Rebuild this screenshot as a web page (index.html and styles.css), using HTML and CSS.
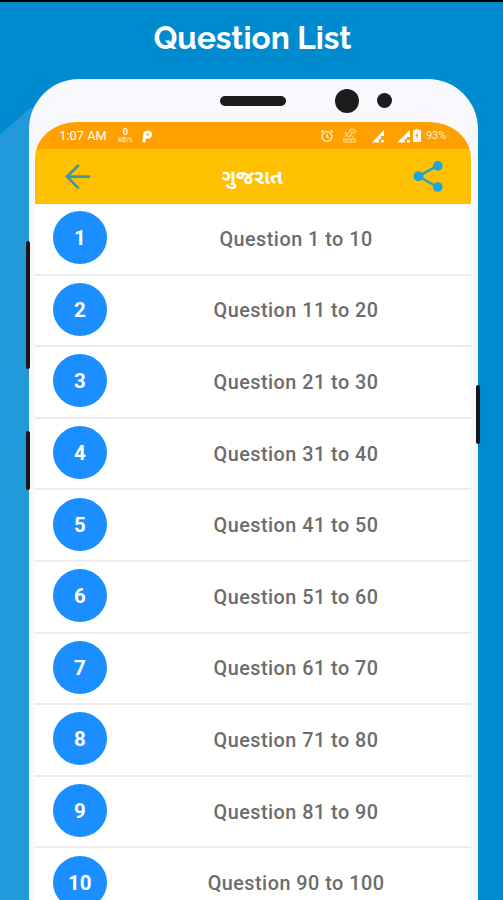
FILE: index.html
```
<!DOCTYPE html>
<html lang="en">
<head>
    <meta charset="UTF-8">
    <meta name="viewport" content="width=device-width, initial-scale=1.0">
    <title>Question List</title>
    <link rel="stylesheet" href="styles.css">
</head>
<body>
    <div class="page">
        <div class="shade"></div>
        <h1>Question List</h1>

        <div class="phone">
            <span class="side-key volume"></span>
            <span class="side-key assistant"></span>
            <span class="side-key power"></span>

            <div class="bezel">
                <span class="speaker"></span>
                <span class="camera"></span>
                <span class="sensor"></span>
            </div>

            <div class="screen">
                <div class="status-bar">
                    <span class="time">1:07 AM</span>
                    <span class="speed"><b>0</b><small>KB/s</small></span>
                    <svg class="parking" width="11" height="14" viewBox="0 0 11 14">
                        <path d="M2 12 3 4.2Q5 2.6 7 3.2 9.3 4.2 8.4 6.6 7.4 8.6 5.2 8" fill="none" stroke="#fff" stroke-width="3.2" stroke-linecap="round"/>
                    </svg>
                    <svg class="alarm" width="14" height="14" viewBox="0 0 14 14" fill="none" stroke="#fff2c4" stroke-width="1.3">
                        <circle cx="7" cy="7.5" r="4.9"/>
                        <path d="M7 4.8V7.7L9 9M1 3.3 3.6 1M13 3.3 10.4 1"/>
                    </svg>
                    <svg class="hotspot" width="16" height="16" viewBox="0 0 16 16" fill="none" stroke="#ffe09a" stroke-width="1.2">
                        <path d="M7 3Q11-1 14.5 4M8.5 5Q11 2.5 13 6M3 4 6 9M7 4 3 9M7 9 10 6M10 9H12"/>
                        <path d="M2 11H13V14H2ZM5 11V14M9 11V14"/>
                    </svg>
                    <svg class="signal" width="14" height="14" viewBox="0 0 14 14">
                        <path d="M0 13.5 12 1V7H9V10H7V13.5Z" fill="#fff"/>
                        <path d="M9 11H12V13.5H9Z" fill="#fff"/>
                    </svg>
                    <svg class="signal signal-two" width="14" height="14" viewBox="0 0 14 14">
                        <path d="M0 13.5 13 1V8H10V10H8V13.5Z" fill="#fff"/>
                        <path d="M10 11H13V13.5H10Z" fill="#fff"/>
                    </svg>
                    <svg class="battery" width="8" height="13" viewBox="0 0 8 13">
                        <path d="M2.5 0H5.5V1.2H8V13H0V1.2H2.5Z" fill="#fff"/>
                        <path d="M4.6 3 2.3 7H3.8L3.3 10.6 5.8 6.3H4.3Z" fill="#ff9f00"/>
                    </svg>
                    <span class="percent">93%</span>
                </div>

                <div class="toolbar">
                    <svg width="26" height="26" viewBox="0 0 26 26" fill="none" stroke="#3a98a5" stroke-width="2.6">
                        <path d="M25 12.6H2M13.7 1 2 12.6 13.7 24.3"/>
                    </svg>
                    <span class="title" lang="gu">ગુજરાત</span>
                    <svg width="30" height="32" viewBox="0 0 30 32" fill="#1aa7dd">
                        <path d="M24.5 4.7 5.5 15.3 24.5 26" fill="none" stroke="#2ba5b5" stroke-width="2.5"/>
                        <circle cx="5.5" cy="15.3" r="5"/>
                        <circle cx="24.8" cy="4.9" r="4.8"/>
                        <circle cx="24.8" cy="26" r="4.8"/>
                    </svg>
                </div>

                <ul class="questions">
                    <li><span class="number">1</span><span class="label">Question 1 to 10</span></li>
                    <li><span class="number">2</span><span class="label">Question 11 to 20</span></li>
                    <li><span class="number">3</span><span class="label">Question 21 to 30</span></li>
                    <li><span class="number">4</span><span class="label">Question 31 to 40</span></li>
                    <li><span class="number">5</span><span class="label">Question 41 to 50</span></li>
                    <li><span class="number">6</span><span class="label">Question 51 to 60</span></li>
                    <li><span class="number">7</span><span class="label">Question 61 to 70</span></li>
                    <li><span class="number">8</span><span class="label">Question 71 to 80</span></li>
                    <li><span class="number">9</span><span class="label">Question 81 to 90</span></li>
                    <li><span class="number">10</span><span class="label">Question 90 to 100</span></li>
                </ul>
            </div>
        </div>
    </div>
</body>
</html>
```

FILE: styles.css
```
* {
    box-sizing: border-box;
}
body {
    margin: 0;
    font-family: Roboto, sans-serif;
}
.page {
    position: relative;
    height: 900px;
    overflow: hidden;
    background: #018bcf;
    border-top: 2px solid #000;
}
/* lighter block to the left of the phone */
.shade {
    position: absolute;
    top: 106px;
    left: 0;
    width: 40px;
    height: 800px;
    background: #229ada;
    clip-path: polygon(0 27px, 30px 0, 40px 0, 40px 100%, 0 100%);
}
h1 {
    margin: 0;
    height: 77px;
    padding-left: 2px;
    color: #fff;
    font-family: Raleway, Lato, sans-serif;
    font-size: 31.6px;
    font-weight: 700;
    line-height: 71px;
    text-align: center;
}
.phone {
    position: relative;
    width: 449.5px;
    height: 900px;
    margin-left: 28.8px;
    padding: 0 7px 0 6.5px;
    background: #f8f8fd;
    border-radius: 50px 50px 0 0;
}
.side-key {
    position: absolute;
    width: 4px;
    background: #171717;
    border-radius: 2px;
}
.volume {
    top: 162px;
    left: -3px;
    height: 128px;
}
.assistant {
    top: 352px;
    left: -3px;
    height: 59px;
}
.power {
    top: 306px;
    right: -1.5px;
    height: 59px;
}
.bezel {
    display: flex;
    align-items: center;
    height: 43px;
    padding-left: 185px;
}
.bezel span {
    background: #1b1d1d;
}
.speaker {
    width: 66px;
    height: 10px;
    border-radius: 5px;
}
.camera {
    width: 24px;
    height: 24px;
    margin-left: 49px;
    border-radius: 50%;
}
.sensor {
    width: 15px;
    height: 15px;
    margin-left: 18px;
    border-radius: 50%;
}
.screen {
    height: 790px;
    overflow: hidden;
    background: #fff;
    border-radius: 42px 42px 0 0 / 36px 36px 0 0;
}
.status-bar {
    display: flex;
    align-items: center;
    height: 27px;
    padding: 0 25px 0 24px;
    background: #ff9f00;
    color: #fff;
}
.time {
    width: 48px;
    font-size: 12.8px;
    white-space: nowrap;
}
.speed {
    display: flex;
    flex-direction: column;
    align-items: center;
    width: 16px;
    margin-left: 10px;
    line-height: 1;
}
.speed b {
    font-size: 9px;
    font-weight: 500;
}
.speed small {
    font-size: 6.5px;
    font-weight: 500;
    color: #fff0c0;
}
.parking {
    margin-left: 9px;
}
.alarm {
    margin-left: auto;
}
.hotspot {
    margin-left: 8px;
}
.signal {
    margin-left: 14px;
}
.signal-two {
    margin-left: 11px;
}
.battery {
    margin-left: 2px;
}
.percent {
    margin-left: 5px;
    font-size: 11px;
    color: #fff0c8;
}
.toolbar {
    display: flex;
    align-items: center;
    justify-content: space-between;
    height: 55px;
    padding: 0 28px 0 29.5px;
    background: #ffc000;
}
.title {
    margin-top: 3px;
    color: #fff;
    font-family: Roboto, "Noto Sans Gujarati", "Lohit Gujarati", sans-serif;
    font-size: 20.5px;
    font-weight: 700;
}
.questions {
    margin: 0;
    padding: 0;
    list-style: none;
}
.questions li {
    display: flex;
    align-items: center;
    height: 71.6px;
    padding-left: 17.5px;
    border-bottom: 2px solid #ececee;
}
.number {
    width: 54px;
    height: 53px;
    margin-bottom: 2px;
    background: #1b8fff;
    border-radius: 50%;
    color: #fff;
    font-size: 20.5px;
    font-weight: 700;
    line-height: 54px;
    text-align: center;
}
.label {
    flex: 1;
    padding: 1px 0 0 14px;
    color: #6c6c6c;
    font-size: 19.8px;
    font-weight: 500;
    letter-spacing: 0.5px;
    text-align: center;
}
```
